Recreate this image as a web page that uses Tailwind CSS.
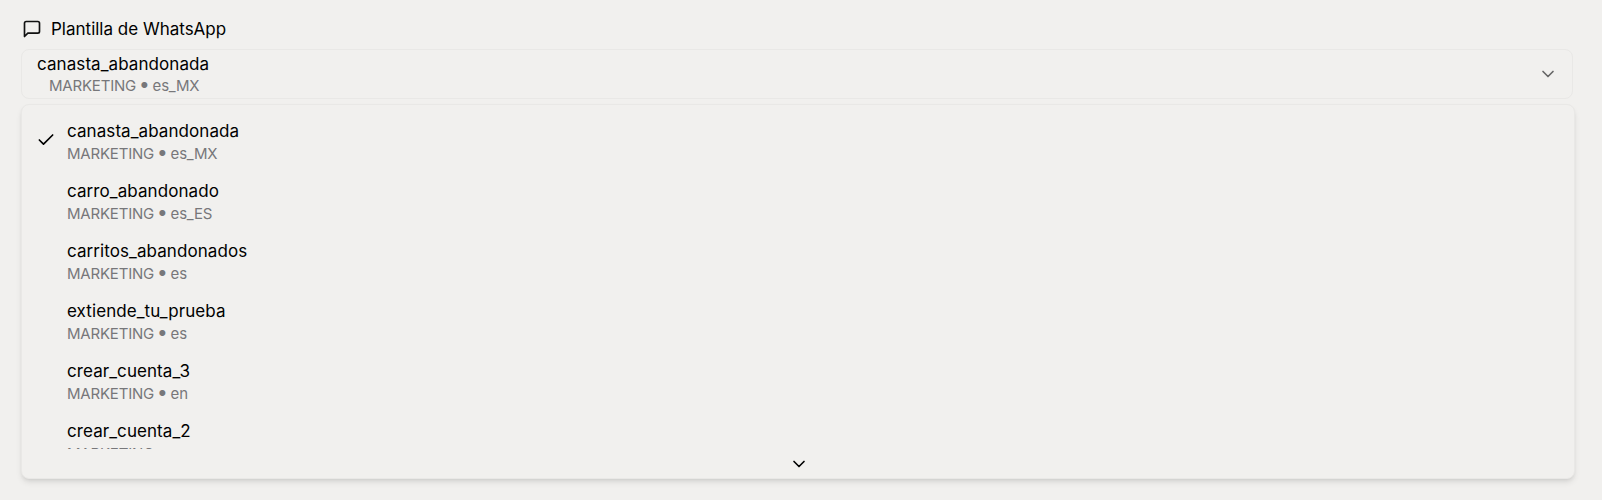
<!DOCTYPE html>
<html lang="es">
<head>
<meta charset="utf-8">
<script src="https://cdn.jsdelivr.net/npm/@tailwindcss/browser@4"></script>
</head>
<body class="bg-[#f1f0ee] font-['Inter',sans-serif] text-black h-[500px] overflow-hidden">
<div class="pl-[21px] pr-[27px] pt-[17px]">
  <div class="flex items-center gap-[9px] h-[24px] mb-[8px] pl-[1px]">
    <svg class="w-[20px] h-[20px]" viewBox="0 0 24 24" fill="none" stroke="#111" stroke-width="2" stroke-linecap="round" stroke-linejoin="round"><path d="M21 15a2 2 0 0 1-2 2H7l-4 4V5a2 2 0 0 1 2-2h14a2 2 0 0 1 2 2z"/></svg>
    <span class="text-[17px] leading-[24px]">Plantilla de WhatsApp</span>
  </div>
  <div class="flex items-center justify-between h-[50px] mr-[2px] pl-[15px] pr-[14px] border border-[#e9e8e6] rounded-[8px]">
    <div class="flex flex-col">
      <span class="text-[17px] leading-[19px] pt-[4px] tracking-[0.08px]">canasta_abandonada</span>
      <span class="text-[15px] leading-[23px] tracking-[-0.2px] text-[#77777a] pl-[12px]">MARKETING <span class="text-[19px] leading-[0] -mx-[1px]">•</span> es_MX</span>
    </div>
    <svg class="w-[20px] h-[20px]" viewBox="0 0 24 24" fill="none" stroke="#666" stroke-width="2" stroke-linecap="round" stroke-linejoin="round"><path d="m6 9 6 6 6-6"/></svg>
  </div>
  <div class="mt-[5px] h-[375px] rounded-[8px] bg-[#f1f0ee] border border-[#e9e8e6] shadow-md flex flex-col overflow-hidden">
    <div class="h-[344px] overflow-hidden pt-[14px] pl-[15px] flex flex-col shrink-0">
      <div class="flex h-[60px] shrink-0">
        <div class="w-[30px] shrink-0 flex items-center pb-[19px] -ml-[1px] mr-[1px]">
          <svg class="w-[20px] h-[20px]" viewBox="0 0 24 24" fill="none" stroke="#000" stroke-width="2" stroke-linecap="round" stroke-linejoin="round"><path d="M20 6 9 17l-5-5"/></svg>
        </div>
        <div class="flex flex-col">
          <span class="text-[17px] leading-[21px] pt-[2px] tracking-[0.08px]">canasta_abandonada</span>
          <span class="text-[15px] leading-[23px] tracking-[-0.2px] text-[#77777a]">MARKETING <span class="text-[19px] leading-[0] -mx-[1px]">•</span> es_MX</span>
        </div>
      </div>
      <div class="flex h-[60px] shrink-0 pl-[30px]">
        <div class="flex flex-col">
          <span class="text-[17px] leading-[21px] pt-[2px] tracking-[0.08px]">carro_abandonado</span>
          <span class="text-[15px] leading-[23px] tracking-[-0.2px] text-[#77777a]">MARKETING <span class="text-[19px] leading-[0] -mx-[1px]">•</span> es_ES</span>
        </div>
      </div>
      <div class="flex h-[60px] shrink-0 pl-[30px]">
        <div class="flex flex-col">
          <span class="text-[17px] leading-[21px] pt-[2px] tracking-[0.08px]">carritos_abandonados</span>
          <span class="text-[15px] leading-[23px] tracking-[-0.2px] text-[#77777a]">MARKETING <span class="text-[19px] leading-[0] -mx-[1px]">•</span> es</span>
        </div>
      </div>
      <div class="flex h-[60px] shrink-0 pl-[30px]">
        <div class="flex flex-col">
          <span class="text-[17px] leading-[21px] pt-[2px] tracking-[0.08px]">extiende_tu_prueba</span>
          <span class="text-[15px] leading-[23px] tracking-[-0.2px] text-[#77777a]">MARKETING <span class="text-[19px] leading-[0] -mx-[1px]">•</span> es</span>
        </div>
      </div>
      <div class="flex h-[60px] shrink-0 pl-[30px]">
        <div class="flex flex-col">
          <span class="text-[17px] leading-[21px] pt-[2px] tracking-[0.08px]">crear_cuenta_3</span>
          <span class="text-[15px] leading-[23px] tracking-[-0.2px] text-[#77777a]">MARKETING <span class="text-[19px] leading-[0] -mx-[1px]">•</span> en</span>
        </div>
      </div>
      <div class="flex h-[60px] shrink-0 pl-[30px]">
        <div class="flex flex-col">
          <span class="text-[17px] leading-[21px] pt-[2px] tracking-[0.08px]">crear_cuenta_2</span>
          <span class="text-[15px] leading-[23px] tracking-[-0.2px] text-[#77777a]">MARKETING <span class="text-[19px] leading-[0] -mx-[1px]">•</span> en</span>
        </div>
      </div>
    </div>
    <div class="flex-1 flex items-center justify-center pl-[2px]">
      <svg class="w-[20px] h-[20px]" viewBox="0 0 24 24" fill="none" stroke="#000" stroke-width="2" stroke-linecap="round" stroke-linejoin="round"><path d="m6 9 6 6 6-6"/></svg>
    </div>
  </div>
</div>
</body>
</html>
